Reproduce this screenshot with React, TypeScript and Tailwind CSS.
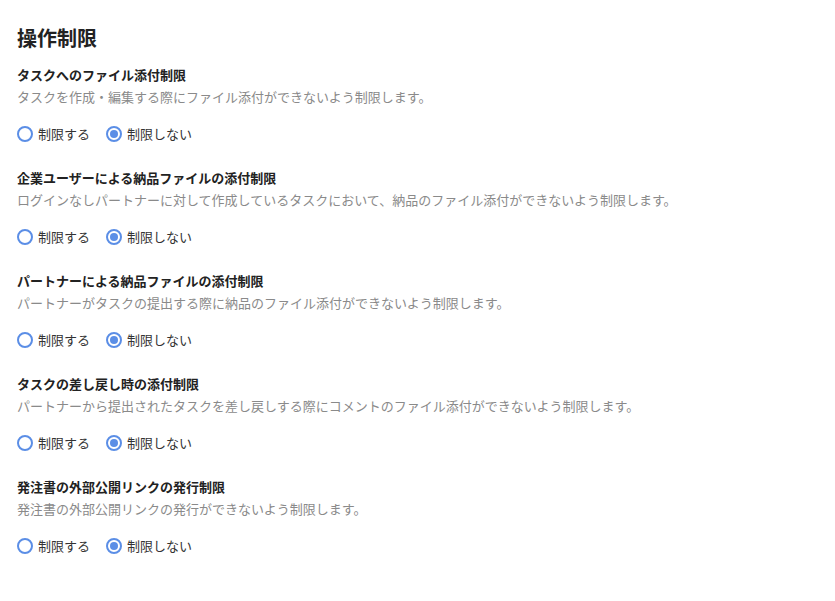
import React, { useState } from "react";

interface Setting {
  id: string;
  title: string;
  description: string;
}

const settings: Setting[] = [
  {
    id: "task-attach",
    title: "タスクへのファイル添付制限",
    description: "タスクを作成・編集する際にファイル添付ができないよう制限します。",
  },
  {
    id: "company-delivery",
    title: "企業ユーザーによる納品ファイルの添付制限",
    description:
      "ログインなしパートナーに対して作成しているタスクにおいて、納品のファイル添付ができないよう制限します。",
  },
  {
    id: "partner-delivery",
    title: "パートナーによる納品ファイルの添付制限",
    description: "パートナーがタスクの提出する際に納品のファイル添付ができないよう制限します。",
  },
  {
    id: "sendback",
    title: "タスクの差し戻し時の添付制限",
    description:
      "パートナーから提出されたタスクを差し戻しする際にコメントのファイル添付ができないよう制限します。",
  },
  {
    id: "order-link",
    title: "発注書の外部公開リンクの発行制限",
    description: "発注書の外部公開リンクの発行ができないよう制限します。",
  },
];

const Radio = ({
  checked,
  label,
  onSelect,
}: {
  checked: boolean;
  label: string;
  onSelect: () => void;
}) => (
  <button type="button" onClick={onSelect} className="flex items-center gap-[5px] h-5">
    <span className="w-4 h-4 rounded-full border-2 border-[#5b8ee6] bg-white flex items-center justify-center">
      {checked && <span className="w-2 h-2 rounded-full bg-[#5b8ee6]" />}
    </span>
    <span className="text-[13px] leading-5 text-[#333]">{label}</span>
  </button>
);

export default function App() {
  const [values, setValues] = useState<Record<string, boolean>>(
    Object.fromEntries(settings.map((s) => [s.id, false]))
  );

  return (
    <div
      className="min-h-screen bg-white pl-[17px] pt-[24px]"
      style={{ fontFamily: '"Noto Sans CJK JP", "Noto Sans", sans-serif' }}
    >
      <h1 className="text-[20px] leading-[28px] font-bold text-[#222]">操作制限</h1>
      <div className="mt-[13px] flex flex-col gap-[24px]">
        {settings.map((s) => (
          <div key={s.id}>
            <h2 className="text-[13px] leading-5 font-bold text-[#222]">{s.title}</h2>
            <p className="mt-[2px] text-[13px] leading-5 text-[#8a8a8a]">{s.description}</p>
            <div className="mt-[17px] flex items-center gap-[16px]">
              <Radio
                checked={values[s.id]}
                label="制限する"
                onSelect={() => setValues({ ...values, [s.id]: true })}
              />
              <Radio
                checked={!values[s.id]}
                label="制限しない"
                onSelect={() => setValues({ ...values, [s.id]: false })}
              />
            </div>
          </div>
        ))}
      </div>
    </div>
  );
}
